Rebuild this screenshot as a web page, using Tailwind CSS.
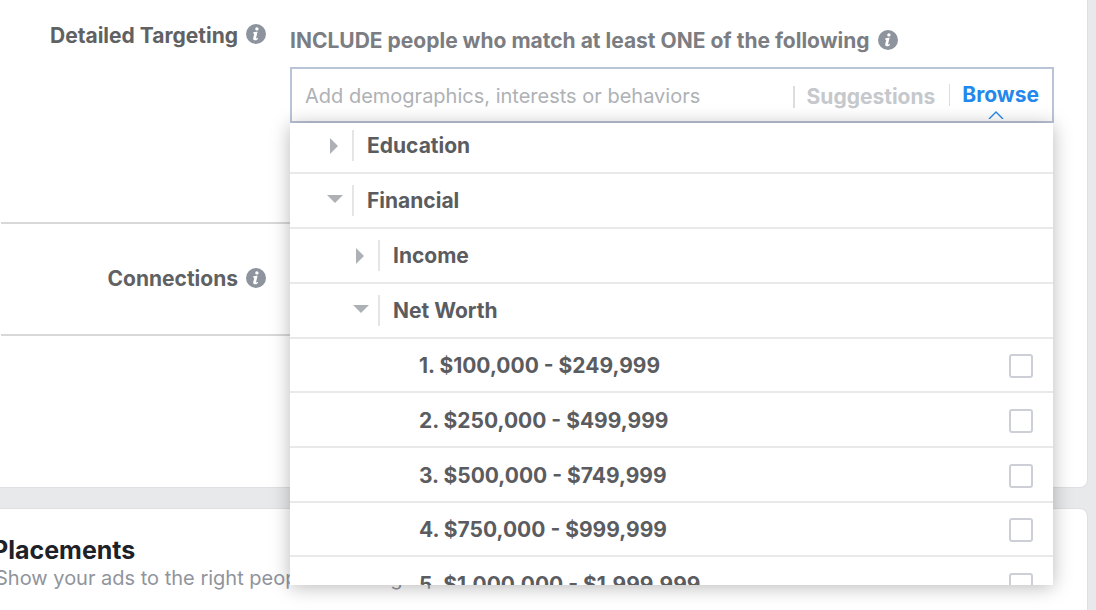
<!DOCTYPE html>
<html lang="en">
<head>
<meta charset="utf-8">
<title>Detailed Targeting</title>
<script src="https://cdn.jsdelivr.net/npm/@tailwindcss/browser@4"></script>
</head>
<body class="min-h-screen overflow-hidden bg-[#e8e9eb] font-['Inter','Noto_Sans',sans-serif] text-[21px] leading-6 text-[#606163]">
<svg class="hidden" aria-hidden="true">
  <symbol id="info" viewBox="0 0 20 20">
    <circle cx="10" cy="10" r="10" fill="#8d949e"/>
    <circle cx="10.9" cy="4.9" r="1.7" fill="#fff"/>
    <path d="M7.2 8.6 Q8.6 7.8 10.6 7.7 L11.6 7.7 L10.2 13.6 Q10 14.7 10.8 14.4 L12 13.8 Q12.4 14.6 11.4 15.4 Q10 16.6 8.4 16.3 Q6.9 15.9 7.2 14.2 L8.3 9.7 L7 9.5 Z" fill="#fff"/>
  </symbol>
  <symbol id="closed" viewBox="0 0 16 16"><path d="M3 0 L11 8 L3 16 Z" fill="#adb1b5"/></symbol>
  <symbol id="open" viewBox="0 0 16 16"><path d="M0 2 H16 L8 10 Z" fill="#adb1b5"/></symbol>
</svg>

<main class="flex flex-col gap-5 pr-2">
  <section class="rounded-br-lg border-r border-b border-[#dddfe2] bg-white pr-[34px] pl-px">
    <div class="flex h-[224px] gap-6 border-b-2 border-[#d8d8d8]">
      <div class="flex w-[265px] shrink-0 justify-end gap-2 pt-6 font-bold">
        <h3>Detailed Targeting</h3>
        <button type="button" aria-label="About detailed targeting" class="size-5"><svg class="size-5"><use href="#info"/></svg></button>
      </div>
      <div class="-mr-px min-w-0 flex-1 pt-[29px]">
        <div class="flex gap-2 font-bold text-[#7b7d82]">
          <label for="search" class="whitespace-nowrap">INCLUDE people who match at least ONE of the following</label>
          <button type="button" aria-label="About matching" class="mt-px size-5"><svg class="size-5"><use href="#info"/></svg></button>
        </div>
        <div class="relative mt-[14px]">
          <div class="flex h-14 items-center border-2 border-[#b9c4d8] px-[13px]">
            <input id="search" type="text" placeholder="Add demographics, interests or behaviors" class="mt-0.5 min-w-0 flex-1 text-[20px] outline-none placeholder:text-[#aeb1b5]">
            <button type="button" class="mt-1 flex items-center gap-3 font-bold text-[#c5c8cc]"><span class="h-[22px] w-0.5 bg-[#dcdddf]"></span>Suggestions</button>
            <span class="ml-[14px] h-[22px] w-px bg-[#dcdddf]"></span>
            <button type="button" class="relative ml-3 font-bold text-[#2487ec]">Browse
              <svg class="absolute top-7 left-[26px] h-2 w-4" viewBox="0 0 16 8" fill="none" stroke="#2487ec" stroke-width="1.4"><path d="M1 8 L8 1 L15 8"/></svg>
            </button>
          </div>
          <div class="absolute top-full right-px left-0 z-10 h-[462px] overflow-hidden bg-white font-bold text-[#5b5c5f] shadow-[0_2px_18px_rgba(0,0,0,0.28)]">
            <ul class="-mt-1">
              <li class="h-[55px] border-b-2 border-[#e9e9e9]"><button type="button" aria-expanded="false" class="flex h-full w-full items-center pl-[37px]"><svg class="mr-[9px] size-4"><use href="#closed"/></svg><span class="mr-[13px] h-[31px] w-0.5 bg-[#e5e5e6]"></span>Education</button></li>
              <li class="h-[55px] border-b-2 border-[#e9e9e9]"><button type="button" aria-expanded="true" class="flex h-full w-full items-center pl-[37px]"><svg class="mr-[9px] size-4"><use href="#open"/></svg><span class="mr-[13px] h-[31px] w-0.5 bg-[#e5e5e6]"></span>Financial</button></li>
              <li class="h-[55px] border-b-2 border-[#e9e9e9]"><button type="button" aria-expanded="false" class="flex h-full w-full items-center pl-[63px]"><svg class="mr-[9px] size-4"><use href="#closed"/></svg><span class="mr-[13px] h-[31px] w-0.5 bg-[#e5e5e6]"></span>Income</button></li>
              <li class="h-[55px] border-b-2 border-[#e9e9e9]"><button type="button" aria-expanded="true" class="flex h-full w-full items-center pl-[63px]"><svg class="mr-[9px] size-4"><use href="#open"/></svg><span class="mr-[13px] h-[31px] w-0.5 bg-[#e5e5e6]"></span>Net Worth</button></li>
              <li class="h-[54px] border-b-2 border-[#e9e9e9]"><label class="flex h-full items-center justify-between pt-0.5 pr-5 pl-[129px]">1. $100,000 - $249,999<input type="checkbox" class="size-6 appearance-none rounded-[3px] border-2 border-[#ccd0d6] bg-white"></label></li>
              <li class="h-[55px] border-b-2 border-[#e9e9e9]"><label class="flex h-full items-center justify-between pt-0.5 pr-5 pl-[129px]">2. $250,000 - $499,999<input type="checkbox" class="size-6 appearance-none rounded-[3px] border-2 border-[#ccd0d6] bg-white"></label></li>
              <li class="h-[55px] border-b-2 border-[#e9e9e9]"><label class="flex h-full items-center justify-between pt-0.5 pr-5 pl-[129px]">3. $500,000 - $749,999<input type="checkbox" class="size-6 appearance-none rounded-[3px] border-2 border-[#ccd0d6] bg-white"></label></li>
              <li class="h-[54px] border-b-2 border-[#e9e9e9]"><label class="flex h-full items-center justify-between pt-0.5 pr-5 pl-[129px]">4. $750,000 - $999,999<input type="checkbox" class="size-6 appearance-none rounded-[3px] border-2 border-[#ccd0d6] bg-white"></label></li>
              <li class="h-[55px] border-b-2 border-[#e9e9e9]"><label class="flex h-full items-center justify-between pt-0.5 pr-5 pl-[129px]">5. $1,000,000 - $1,999,999<input type="checkbox" class="size-6 appearance-none rounded-[3px] border-2 border-[#ccd0d6] bg-white"></label></li>
            </ul>
          </div>
        </div>
      </div>
    </div>
    <div class="flex h-28 items-center border-b-2 border-[#d8d8d8]">
      <div class="flex w-[265px] justify-end gap-2 font-bold">
        <h3>Connections</h3>
        <button type="button" aria-label="About connections" class="mt-px size-5"><svg class="size-5"><use href="#info"/></svg></button>
      </div>
    </div>
    <div class="h-[151px]"></div>
  </section>

  <section class="h-32 rounded-tr-lg border-t border-r border-[#dddfe2] bg-white pt-[27px]">
    <h2 class="-ml-2 text-[25px] leading-7 font-bold text-[#1d2129]">Placements</h2>
    <p class="-ml-[5px] pt-0.5 text-[20px] whitespace-nowrap text-[#90949c]">Show your ads to the right people in the right places.</p>
  </section>
</main>
</body>
</html>
